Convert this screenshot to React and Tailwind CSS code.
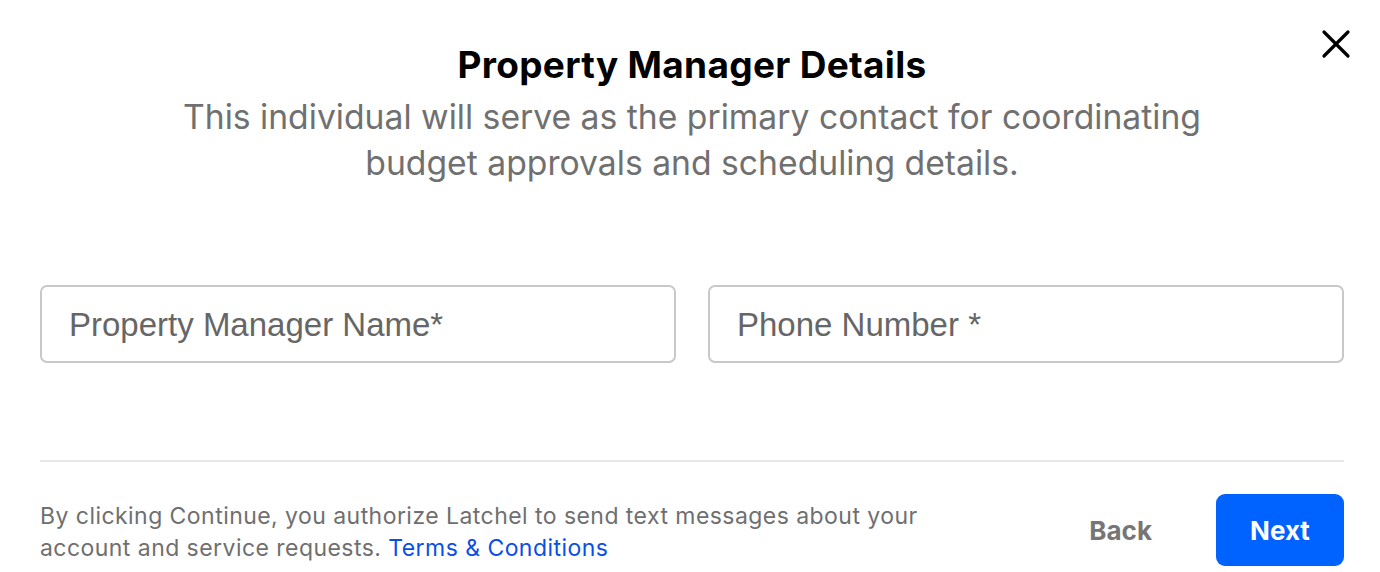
export default function App() {
  return (
    <div className="w-[1380px] h-[572px] bg-white relative overflow-hidden" style={{ fontFamily: "Inter, 'Noto Sans', sans-serif" }}>
      <button className="absolute left-[1321px] top-[29px] w-[30px] h-[30px] flex items-center justify-center">
        <svg width="30" height="30" viewBox="0 0 30 30" fill="none" stroke="#000" strokeWidth="3.2" strokeLinecap="round">
          <path d="M3 3L27 27M27 3L3 27" />
        </svg>
      </button>
      <div className="pl-10 pr-9 flex flex-col">
        <h1 className="mt-[42px] text-center text-[37px] leading-[46px] font-bold text-black tracking-[0.3px]">Property Manager Details</h1>
        <p className="mt-[6px] mx-auto w-[1100px] text-center text-[33.7px] leading-[46px] text-[#707070]">
          This individual will serve as the primary contact for coordinating<br />budget approvals and scheduling details.
        </p>
        <div className="mt-[99px] grid grid-cols-2 gap-8">
          <div className="h-[78px] border-2 border-[#c8c8c8] rounded-[7px] flex items-center pl-[27px] pt-[2px] text-[33px] text-[#666]" style={{ fontFamily: "'Liberation Sans', Arial, sans-serif" }}>
            Property Manager Name*
          </div>
          <div className="h-[78px] border-2 border-[#c8c8c8] rounded-[7px] flex items-center pl-[27px] pt-[2px] text-[33px] text-[#666]" style={{ fontFamily: "'Liberation Sans', Arial, sans-serif" }}>
            Phone Number *
          </div>
        </div>
        <div className="mt-[97px] h-[2px] bg-[#e7e7ea]" />
        <div className="mt-[32px] flex items-start justify-between">
          <p className="mt-[6px] w-[930px] text-[23px] leading-[32px] tracking-[0.45px] text-[#6f6f6f]">
            By clicking Continue, you authorize Latchel to send text messages about your account and service requests. <span className="text-[#0a4fe6]">Terms &amp; Conditions</span>
          </p>
          <div className="flex items-center gap-[64px]">
            <span className="text-[26px] font-bold text-[#767676]">Back</span>
            <button className="w-[128px] h-[72px] rounded-[9px] bg-[#0062ff] text-white text-[26px] font-bold">Next</button>
          </div>
        </div>
      </div>
    </div>
  );
}
